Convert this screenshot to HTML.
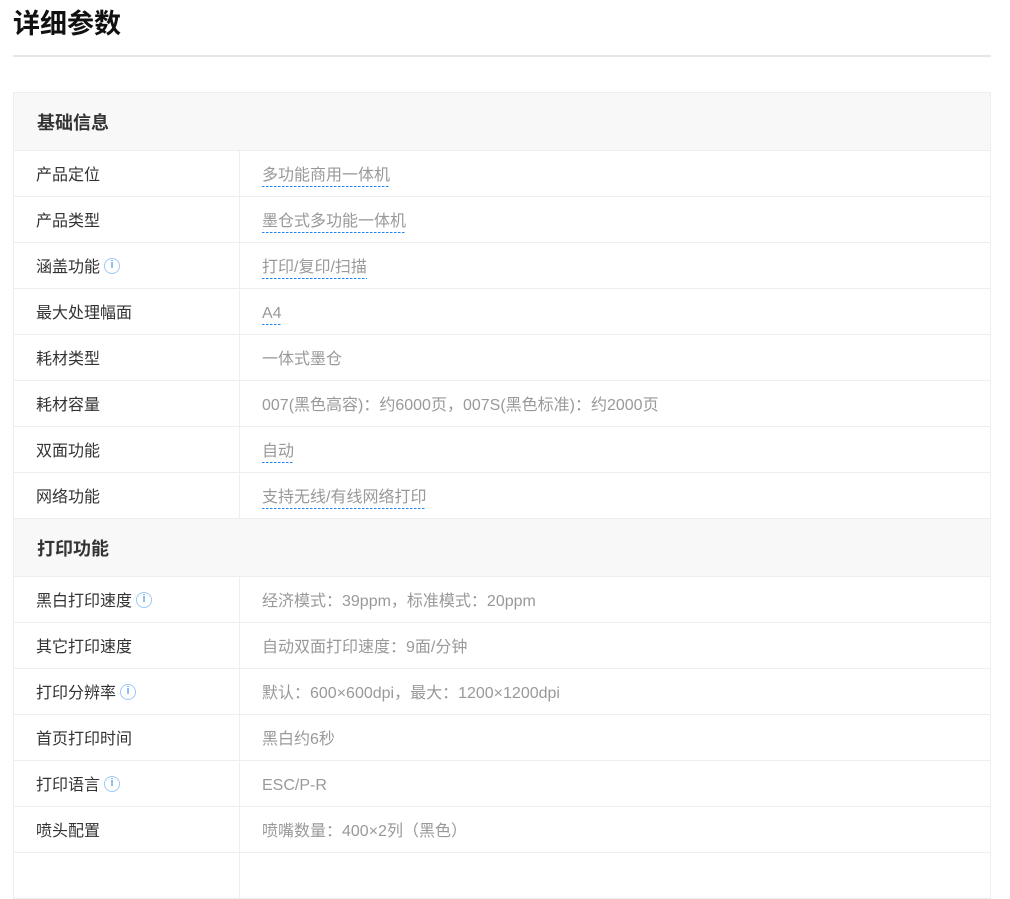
<!DOCTYPE html>
<html><head><meta charset="utf-8"><style>
*{margin:0;padding:0;box-sizing:border-box}
body{width:1010px;height:859px;overflow:hidden;background:#fff;font-family:"Liberation Sans","Noto Sans CJK SC",sans-serif;position:relative}
h1{position:absolute;left:13px;top:6px;font-size:27px;font-weight:bold;color:#111;line-height:36px}
.hr{position:absolute;left:13px;top:55px;width:978px;height:2px;background:#e6e6e6}
.tbl{position:absolute;left:13px;top:92px;width:978px;border:1px solid #eee;border-bottom:none}
.h{height:58px;background:#f8f8f8;border-bottom:1px solid #eee;padding-left:23px;font-size:18px;font-weight:bold;color:#333;line-height:60px}
.r{height:46px;border-bottom:1px solid #eee;display:flex;font-size:16px;line-height:50px}
.l{width:226px;border-right:1px solid #eee;padding-left:22px;color:#333;white-space:nowrap}
.v{padding-left:22px;color:#999;white-space:nowrap}
.u{line-height:20px;display:inline-block;padding-bottom:1px;background:linear-gradient(90deg,#1a88f0 60%,transparent 60%) 0 100%/4px 1px repeat-x}
.i{display:inline-block;width:16px;height:16px;border:1.5px solid #9cc9f5;border-radius:50%;color:#6aaeef;font-size:11px;line-height:13px;text-align:center;vertical-align:middle;position:relative;top:-2px;margin-left:4px;font-weight:bold}
</style></head><body>
<h1>详细参数</h1>
<div class="hr"></div>
<div class="tbl">
<div class="h">基础信息</div>
<div class="r"><div class="l">产品定位</div><div class="v"><span class="u">多功能商用一体机</span></div></div>
<div class="r"><div class="l">产品类型</div><div class="v"><span class="u">墨仓式多功能一体机</span></div></div>
<div class="r"><div class="l">涵盖功能<span class="i">i</span></div><div class="v"><span class="u">打印/复印/扫描</span></div></div>
<div class="r"><div class="l">最大处理幅面</div><div class="v"><span class="u">A4</span></div></div>
<div class="r"><div class="l">耗材类型</div><div class="v">一体式墨仓</div></div>
<div class="r"><div class="l">耗材容量</div><div class="v">007(黑色高容)：约6000页，007S(黑色标准)：约2000页</div></div>
<div class="r"><div class="l">双面功能</div><div class="v"><span class="u">自动</span></div></div>
<div class="r"><div class="l">网络功能</div><div class="v"><span class="u">支持无线/有线网络打印</span></div></div>
<div class="h">打印功能</div>
<div class="r"><div class="l">黑白打印速度<span class="i">i</span></div><div class="v">经济模式：39ppm，标准模式：20ppm</div></div>
<div class="r"><div class="l">其它打印速度</div><div class="v">自动双面打印速度：9面/分钟</div></div>
<div class="r"><div class="l">打印分辨率<span class="i">i</span></div><div class="v">默认：600×600dpi，最大：1200×1200dpi</div></div>
<div class="r"><div class="l">首页打印时间</div><div class="v">黑白约6秒</div></div>
<div class="r"><div class="l">打印语言<span class="i">i</span></div><div class="v">ESC/P-R</div></div>
<div class="r"><div class="l">喷头配置</div><div class="v">喷嘴数量：400×2列（黑色）</div></div>
<div class="r"><div class="l"></div><div class="v"></div></div>
</div>
</body></html>
